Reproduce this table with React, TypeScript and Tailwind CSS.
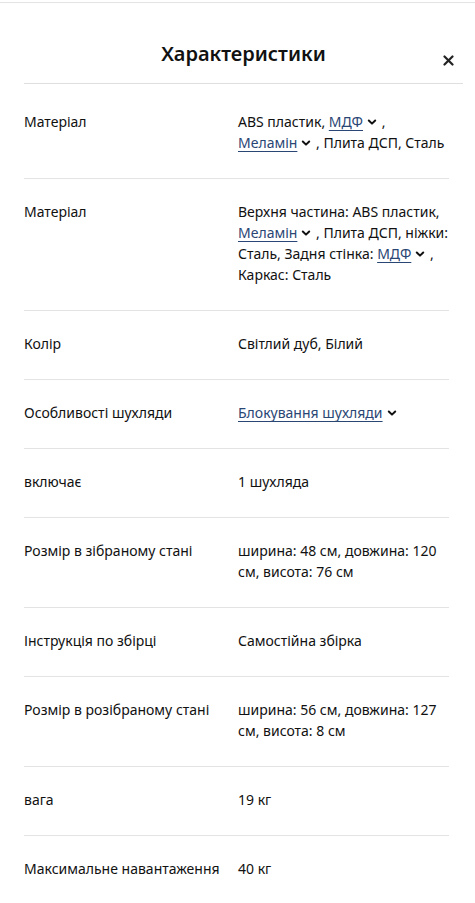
import React from 'react';

const Chevron = () => (
  <svg
    width="10"
    height="10"
    viewBox="0 0 10 10"
    className="inline-block align-middle ml-[4px] mr-px -mt-[2px]"
    fill="none"
    stroke="#111"
    strokeWidth="2"
    strokeLinecap="round"
    strokeLinejoin="round"
  >
    <path d="M1.8 3.5 5 6.6 8.2 3.5" />
  </svg>
);

const Link = ({ children }: { children: React.ReactNode }) => (
  <span className="whitespace-nowrap">
    <a href="#" className="text-[#2a4674] underline underline-offset-[3px] decoration-1">
      {children}
    </a>
    <Chevron />
  </span>
);

type Row = { label: string; value: React.ReactNode };

const rows: Row[] = [
  {
    label: 'Матеріал',
    value: (
      <>
        ABS пластик, <Link>МДФ</Link> , <Link>Меламін</Link> , Плита ДСП, Сталь
      </>
    ),
  },
  {
    label: 'Матеріал',
    value: (
      <>
        Верхня частина: ABS пластик, <Link>Меламін</Link> , Плита ДСП, ніжки: Сталь, Задня стінка:{' '}
        <Link>МДФ</Link> , Каркас: Сталь
      </>
    ),
  },
  { label: 'Колір', value: 'Світлий дуб, Білий' },
  { label: 'Особливості шухляди', value: <Link>Блокування шухляди</Link> },
  { label: 'включає', value: '1 шухляда' },
  { label: 'Розмір в зібраному стані', value: 'ширина: 48 см, довжина: 120 см, висота: 76 см' },
  { label: 'Інструкція по збірці', value: 'Самостійна збірка' },
  { label: 'Розмір в розібраному стані', value: 'ширина: 56 см, довжина: 127 см, висота: 8 см' },
  { label: 'вага', value: '19 кг' },
  { label: 'Максимальне навантаження', value: '40 кг' },
];

export default function App() {
  return (
    <div className="min-h-screen bg-white text-[#111] font-['Noto_Sans',sans-serif]">
      <div className="h-[2px]" />
      <div className="h-px bg-[#e3e3e3]" />

      {/* Header */}
      <div className="ml-6 mr-3 border-b border-[#dfdfdf] flex items-start pt-[36px] pb-[14px]">
        <div className="w-10" />
        <h2 className="flex-1 text-center text-[20px] leading-[30px] font-semibold">Характеристики</h2>
        <button className="w-10 flex justify-end pt-[16px] pr-[9px]">
          <svg width="11" height="11" viewBox="0 0 11 11" stroke="#222" strokeWidth="2.2" strokeLinecap="round">
            <path d="M1.5 1.5l8 8M9.5 1.5l-8 8" />
          </svg>
        </button>
      </div>

      {/* Rows */}
      <div className="ml-6 mr-[26px] mt-[5px] text-[14px] leading-[21px]">
        {rows.map((row, i) => (
          <div key={i} className="grid grid-cols-[214px_1fr] pt-[22px] pb-[25px] border-b border-[#e3e3e3]">
            <div className="pr-2">{row.label}</div>
            <div>{row.value}</div>
          </div>
        ))}
      </div>
    </div>
  );
}
